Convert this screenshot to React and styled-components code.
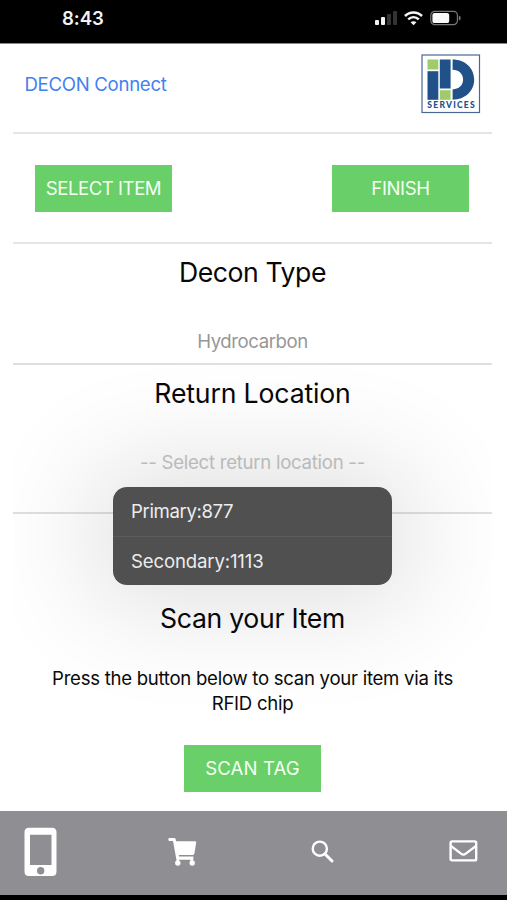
import React from "react";
import styled, { createGlobalStyle } from "styled-components";

const GlobalStyle = createGlobalStyle`
  * { box-sizing: border-box; }
  body { margin: 0; background: #fff; }
`;

const Screen = styled.div`
  width: 507px;
  height: 900px;
  display: flex;
  flex-direction: column;
  overflow: hidden;
  background: #fff;
  color: #0b0b0b;
  font-family: Inter, "Liberation Sans", sans-serif;
  font-size: 18.6px;
`;

const StatusBar = styled.div`
  height: 44px;
  flex: none;
  display: flex;
  justify-content: space-between;
  padding: 0 46px 0 62px;
  background: #000;
  border-bottom: 1px solid #8c8884;
`;

const Clock = styled.time`
  margin-top: 6px;
  line-height: 25px;
  font-size: 18.6px;
  font-weight: 600;
  letter-spacing: -0.1px;
  color: #f2f2f2;
`;

const StatusIcons = styled.div`
  display: flex;
  gap: 7px;
  padding-top: 10px;
  svg { display: block; }
`;

const Content = styled.main`
  height: 767px;
  flex: none;
  margin: 0 15px 0 13px;
  overflow: hidden;
  display: flex;
  flex-direction: column;
`;

const Section = styled.section`
  position: relative;
  flex: none;
  height: ${(p) => p.$height}px;
  border-bottom: ${(p) => (p.$last ? "none" : "2px solid #e0e0e0")};
  display: flex;
  flex-direction: column;
  align-items: center;
`;

const Header = styled.header`
  flex: none;
  height: 90px;
  display: flex;
  justify-content: space-between;
  align-items: flex-start;
  padding: 10px 11px 0 11.5px;
  border-bottom: 2px solid #e5e5e5;
`;

const Brand = styled.a`
  margin-top: 18px;
  line-height: 25px;
  letter-spacing: ${(p) => p.$track}px;
  color: #3f82ee;
`;

const Actions = styled.div`
  flex: none;
  height: 110px;
  display: flex;
  justify-content: space-between;
  padding: 31px 23px 0 22px;
  border-bottom: 2px solid #e5e5e5;
`;

const Button = styled.button`
  width: 137px;
  height: 47px;
  padding: 0 0 1px;
  border: 0;
  background: #69cf69;
  color: #f4fff2;
  font: inherit;
  letter-spacing: ${(p) => p.$track}px;
  white-space: nowrap;
`;

const Title = styled.h2`
  margin: ${(p) => p.$top}px 0 0;
  font-size: 26.6px;
  font-weight: 400;
  line-height: 34px;
  letter-spacing: ${(p) => p.$track}px;
  color: #080808;
  white-space: nowrap;
`;

const Value = styled.div`
  margin-top: 40px;
  line-height: 25px;
  letter-spacing: ${(p) => p.$track}px;
  color: ${(p) => (p.$placeholder ? "#c6c6c6" : "#979797")};
  white-space: nowrap;
`;

const Hint = styled.p`
  width: 440px;
  margin: 31px 0 29px;
  line-height: 25px;
  text-align: center;
  letter-spacing: ${(p) => p.$track}px;
`;

const Menu = styled.div`
  position: absolute;
  left: 100px;
  top: 122px;
  width: 279px;
  height: 98px;
  z-index: 1;
  border-radius: 14px;
  background: #505050;
  box-shadow: 0 0 110px 24px rgba(0, 0, 0, 0.12);
`;

const MenuItem = styled.div`
  height: 49px;
  padding-left: 18px;
  line-height: 49px;
  color: #ececec;
  letter-spacing: ${(p) => p.$track}px;
  & + & { border-top: 1px solid #5c5c5c; }
`;

const TabBar = styled.nav`
  flex: none;
  height: 84px;
  display: flex;
  align-items: center;
  justify-content: space-between;
  padding: 0 29px 3px 24px;
  background: #8f8e93;
  svg { display: block; }
`;

const Tab = styled.div`
  margin: 0 ${(p) => p.$after || 0}px ${(p) => p.$lift || 0}px ${(p) => -(p.$after || 0)}px;
`;

const HomeStrip = styled.div`
  flex: 1;
  background: #000;
`;

function Logo() {
  return (
    <svg width="60" height="60" viewBox="0 0 60 60">
      <rect x="1" y="1" width="57.5" height="57.5" fill="#fff" stroke="#466998" strokeWidth="1.2" />
      <rect x="6.5" y="5.5" width="10.8" height="10" fill="#9fcb6c" />
      <rect x="6.5" y="17.2" width="10.8" height="28.6" fill="#205189" />
      <rect x="18.8" y="5.5" width="10.8" height="29" fill="#205189" />
      <rect x="18.8" y="36.2" width="10.8" height="9.6" fill="#9fcb6c" />
      <path d="M31.6 5.5C44 5.5 53.2 14 53.2 25.6S44 45.8 31.6 45.8V35.4C37.8 35.4 42.1 31.4 42.1 25.6S37.8 15.8 31.6 15.8Z" fill="#205189" />
      <text x="6.3" y="54.2" textLength="47.4" fontFamily="Lato, sans-serif" fontWeight="900" fontSize="8.5" fill="#205189">SERVICES</text>
    </svg>
  );
}

function Signal() {
  return (
    <svg width="23" height="16" viewBox="0 0 23 16">
      <rect x="1" y="10" width="4" height="5" rx="1" fill="#f4f4f4" />
      <rect x="7" y="7" width="4" height="8" rx="1" fill="#f4f4f4" />
      <rect x="13" y="4" width="4" height="11" rx="1" fill="#333" />
      <rect x="19" y="1" width="4" height="14" rx="1" fill="#333" />
    </svg>
  );
}

function Wifi() {
  return (
    <svg width="19" height="16" viewBox="0 0 19 16" fill="none" stroke="#f5f5f5" strokeWidth="2.5">
      <path d="M1 6C5.8 1.2 13.2 1.2 18 6" />
      <path d="M4.2 9.4C7.3 6.4 11.7 6.4 14.8 9.4" />
      <path d="M9.5 15.2L6.6 12.2C8.2 10.8 10.8 10.8 12.4 12.2Z" fill="#f5f5f5" stroke="none" />
    </svg>
  );
}

function Battery() {
  return (
    <svg width="31" height="17" viewBox="0 0 31 17">
      <rect x="0.8" y="1.3" width="26.6" height="13.4" rx="4" fill="none" stroke="#777" strokeWidth="1.2" />
      <rect x="2.4" y="2.9" width="16.8" height="10.2" rx="2.2" fill="#fafafa" />
      <path d="M28.8 5.5Q30.8 6 30.8 8T28.8 10.5Z" fill="#777" />
    </svg>
  );
}

function PhoneIcon() {
  return (
    <svg width="33" height="50" viewBox="0 0 33 50">
      <path fill="#fff" fillRule="evenodd" d="M5 .7H28Q32.5.7 32.5 5.2V44.5Q32.5 49 28 49H5Q.5 49 .5 44.5V5.2Q.5.7 5 .7ZM6 7.7V38H27.5V7.7ZM16.7 40.1A3.7 3.7 0 1 0 16.7 47.5A3.7 3.7 0 1 0 16.7 40.1Z" />
    </svg>
  );
}

function CartIcon() {
  return (
    <svg width="29" height="30" viewBox="0 0 29 30">
      <path fill="#fff" d="M1.5 1H6.2Q7.4 1 7.7 2.3L8.1 4.2H27Q28.4 4.2 28.2 5.6L26.4 16.5Q26.1 18 24.7 18H10.8L11.1 19.6H25.4V22.8H9.6Q8.4 22.8 8.2 21.6L5 4H1.5Q.4 4 .4 2.9V2.1Q.4 1 1.5 1Z" />
      <path d="M10 21L9.4 25.5M23.4 21L24 25.5" stroke="#fff" strokeWidth="2.4" />
      <circle cx="9.8" cy="26" r="2.7" fill="#fff" />
      <circle cx="24.2" cy="26" r="2.7" fill="#fff" />
    </svg>
  );
}

function SearchIcon() {
  return (
    <svg width="23" height="23" viewBox="0 0 23 23" fill="none" stroke="#fff">
      <circle cx="8.8" cy="8.7" r="7.1" strokeWidth="2.4" />
      <path d="M14 14L21 21" strokeWidth="3" strokeLinecap="round" />
    </svg>
  );
}

function MailIcon() {
  return (
    <svg width="29" height="22" viewBox="0 0 29 22" fill="none" stroke="#fff" strokeLinejoin="round">
      <rect x="1.6" y="1.4" width="25.6" height="19" rx="1.4" strokeWidth="2.4" />
      <path d="M2 6L12 13.7Q14.4 15.6 16.8 13.7L27 6" strokeWidth="2.3" />
    </svg>
  );
}

export default function App() {
  return (
    <>
      <GlobalStyle />
      <Screen>
        <StatusBar>
          <Clock>8:43</Clock>
          <StatusIcons>
            <Signal />
            <Wifi />
            <Battery />
          </StatusIcons>
        </StatusBar>
        <Content>
          <Header>
            <Brand $track={-0.3}>DECON Connect</Brand>
            <Logo />
          </Header>
          <Actions>
            <Button $track={-0.48}>SELECT ITEM</Button>
            <Button $track={-0.4}>FINISH</Button>
          </Actions>
          <Section $height={121}>
            <Title $top={11} $track={-0.42}>Decon Type</Title>
            <Value $track={-0.42}>Hydrocarbon</Value>
          </Section>
          <Section $height={149}>
            <Title $top={11} $track={-0.14}>Return Location</Title>
            <Value $track={-0.27} $placeholder>-- Select return location --</Value>
            <Menu>
              <MenuItem $track={-0.38}>Primary:877</MenuItem>
              <MenuItem $track={-0.15}>Secondary:1113</MenuItem>
            </Menu>
          </Section>
          <Section $height={297} $last>
            <Title $top={87} $track={-0.28}>Scan your Item</Title>
            <Hint $track={-0.28}>Press the button below to scan your item via its RFID chip</Hint>
            <Button $track={0.12}>SCAN TAG</Button>
          </Section>
        </Content>
        <TabBar>
          <Tab><PhoneIcon /></Tab>
          <Tab $after={2}><CartIcon /></Tab>
          <Tab $after={1.5}><SearchIcon /></Tab>
          <Tab $lift={1}><MailIcon /></Tab>
        </TabBar>
        <HomeStrip />
      </Screen>
    </>
  );
}
